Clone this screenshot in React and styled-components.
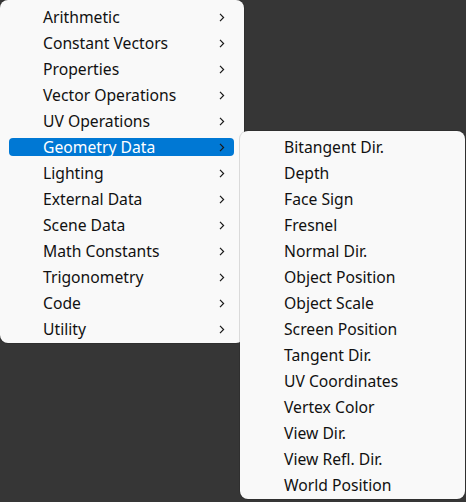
import React from 'react'
import styled, { createGlobalStyle } from 'styled-components'

const Global = createGlobalStyle`
  html, body {
    margin: 0;
    padding: 0;
    background: #363636;
  }
  body {
    width: 466px;
    height: 502px;
    overflow: hidden;
    font-family: "Noto Sans", "Open Sans", sans-serif;
  }
`

const Stage = styled.div`
  position: relative;
  width: 466px;
  height: 502px;
`

const Menu = styled.div`
  position: absolute;
  left: ${p => p.$left}px;
  top: ${p => p.$top}px;
  width: ${p => p.$width}px;
  box-sizing: border-box;
  padding: ${p => p.$padTop}px 0 1px;
  background: #f9f9f9;
  border-radius: 8px;
  box-shadow: 0 0 0 1px rgba(0, 0, 0, 0.12);
  display: flex;
  flex-direction: column;
`

const Item = styled.div`
  height: 26px;
  display: flex;
  align-items: center;
  padding: 4px ${p => p.$padRight}px 4px ${p => p.$padLeft}px;
  box-sizing: border-box;
`

const ItemInner = styled.div`
  flex: 1;
  height: 18px;
  display: flex;
  align-items: center;
  border-radius: 4px;
  padding-left: ${p => p.$textLeft}px;
  padding-right: 9px;
  background: ${p => (p.$active ? '#0078d4' : 'transparent')};
  color: ${p => (p.$active ? '#ffffff' : '#111111')};
`

const Label = styled.span`
  flex: 1;
  font-size: 15.7px;
  line-height: 18px;
  white-space: nowrap;
`

const Chevron = () => (
  <svg width="6" height="9" viewBox="0 0 6 9">
    <polyline points="1,0.8 4.6,4.5 1,8.2" fill="none" stroke="#1a1a1a" strokeWidth="1.2" />
  </svg>
)

const mainItems = [
  'Arithmetic',
  'Constant Vectors',
  'Properties',
  'Vector Operations',
  'UV Operations',
  'Geometry Data',
  'Lighting',
  'External Data',
  'Scene Data',
  'Math Constants',
  'Trigonometry',
  'Code',
  'Utility',
]

const subItems = [
  'Bitangent Dir.',
  'Depth',
  'Face Sign',
  'Fresnel',
  'Normal Dir.',
  'Object Position',
  'Object Scale',
  'Screen Position',
  'Tangent Dir.',
  'UV Coordinates',
  'Vertex Color',
  'View Dir.',
  'View Refl. Dir.',
  'World Position',
]

export default function App() {
  return (
    <Stage>
      <Global />
      <Menu $left={0} $top={0} $width={244} $padTop={4}>
        {mainItems.map(name => (
          <Item key={name} $padLeft={9} $padRight={10}>
            <ItemInner $textLeft={34} $active={name === 'Geometry Data'}>
              <Label>{name}</Label>
              <Chevron />
            </ItemInner>
          </Item>
        ))}
      </Menu>
      <Menu $left={240} $top={131} $width={225} $padTop={3}>
        {subItems.map(name => (
          <Item key={name} $padLeft={9} $padRight={10}>
            <ItemInner $textLeft={35}>
              <Label>{name}</Label>
            </ItemInner>
          </Item>
        ))}
      </Menu>
    </Stage>
  )
}
